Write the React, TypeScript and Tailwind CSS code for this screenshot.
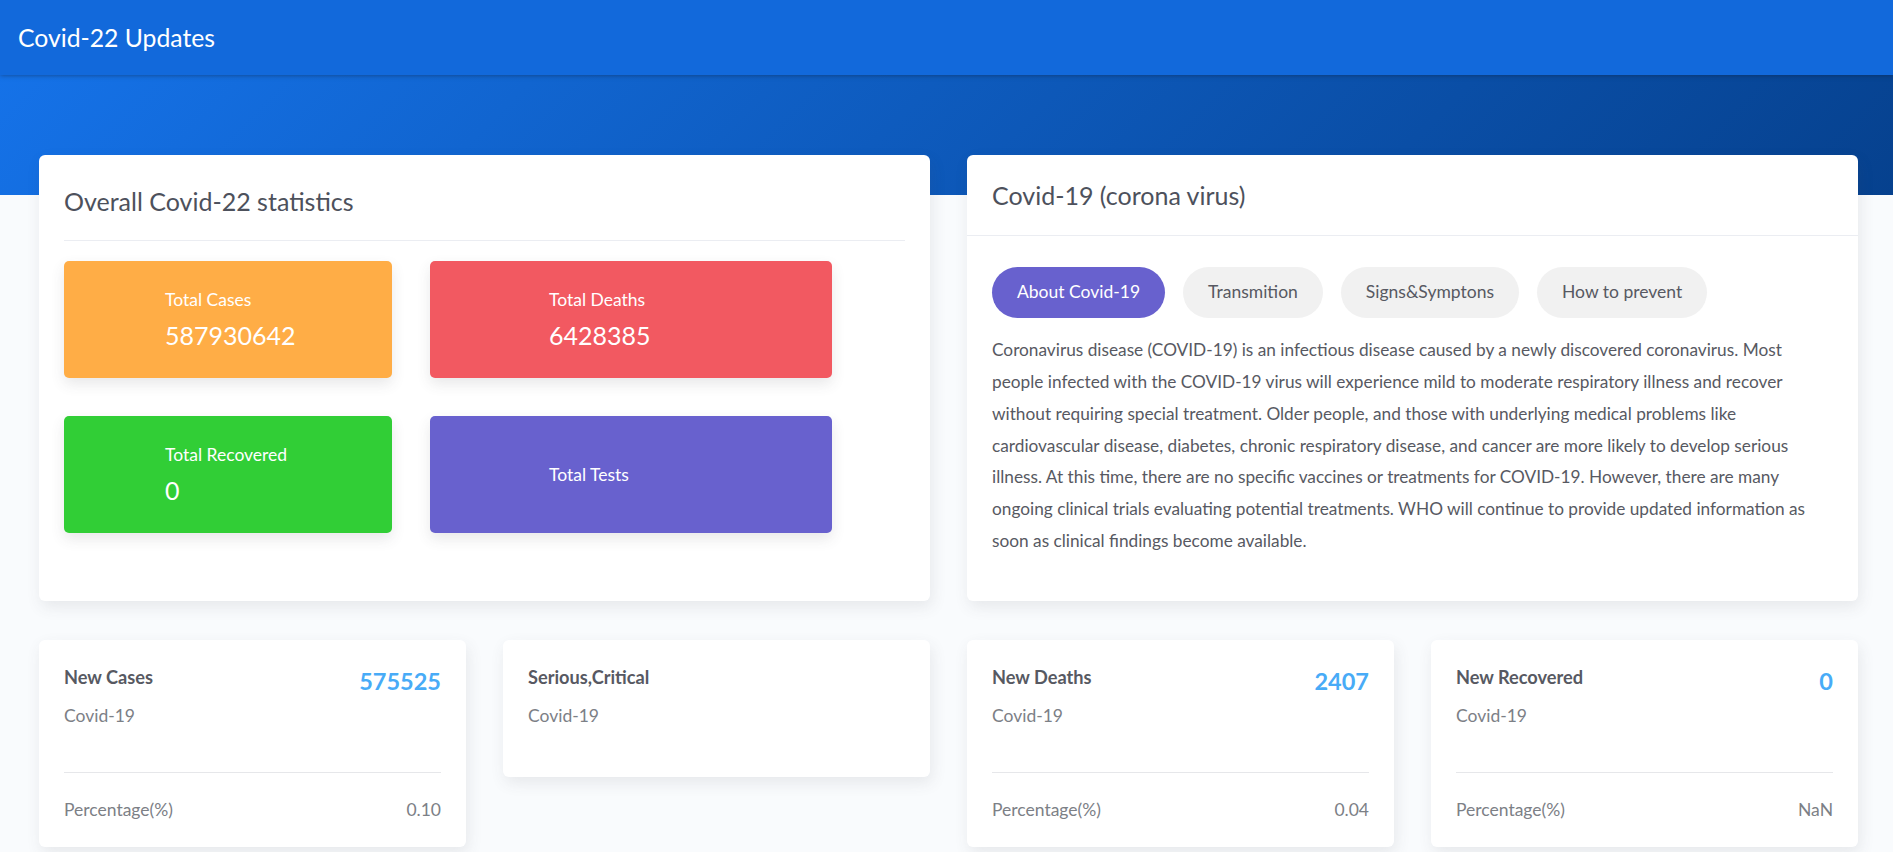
import React from "react";

const totals = [
  { label: "Total Cases", value: "587930642", bg: "bg-[#ffad46]", pad: "pl-[101px]" },
  { label: "Total Deaths", value: "6428385", bg: "bg-[#f25961]", pad: "pl-[119px]" },
  { label: "Total Recovered", value: "0", bg: "bg-[#31ce36]", pad: "pl-[101px]" },
  { label: "Total Tests", value: "", bg: "bg-[#6861ce]", pad: "pl-[119px]" },
];

const tabs = ["About Covid-19", "Transmition", "Signs&Symptons", "How to prevent"];

const daily = [
  { title: "New Cases", value: "575525", pct: "0.10" },
  { title: "Serious,Critical", value: "", pct: null },
  { title: "New Deaths", value: "2407", pct: "0.04" },
  { title: "New Recovered", value: "0", pct: "NaN" },
];

const card = "rounded-[6px] bg-white shadow-[2px_6px_15px_0px_rgba(69,65,78,0.1)]";

function StatBox({ label, value, bg, pad }: (typeof totals)[number]) {
  return (
    <div className={`flex h-[117px] flex-col justify-center rounded-[5px] text-white shadow-[0_6px_14px_rgba(69,65,78,0.12)] ${bg} ${pad}`}>
      <p className="text-[17.5px] leading-[24px]">{label}</p>
      {value && <p className="mt-[8px] pb-[2px] text-[25px] leading-[30px]">{value}</p>}
    </div>
  );
}

function DailyCard({ title, value, pct }: (typeof daily)[number]) {
  return (
    <div className={`${card} px-[25px] pt-[25px] ${pct ? "pb-[25px]" : "pb-[49px]"}`}>
      <div className="flex items-start justify-between">
        <div>
          <h4 className="text-[18.2px] font-bold leading-[25px] text-[#575962]">{title}</h4>
          <p className="mt-[13px] text-[17.5px] leading-[25px] text-[#7c8086]">Covid-19</p>
        </div>
        {value && <span className="text-[23.5px] font-bold leading-[33px] text-[#48abf7]">{value}</span>}
      </div>
      {pct && (
        <>
          <div className="mt-[44px] border-t border-[#e6e7ea]" />
          <div className="mt-[24px] flex justify-between text-[17.5px] leading-[25px] text-[#7c8086]">
            <span>Percentage(%)</span>
            <span>{pct}</span>
          </div>
        </>
      )}
    </div>
  );
}

export default function App() {
  return (
    <div className="min-h-screen bg-[#f9fbfd] font-['Lato',sans-serif] text-[#575962]">
      <header className="relative z-10 flex h-[75px] items-center bg-[#1269db] px-[18px] shadow-[0_0_5px_rgba(18,23,39,0.5)]">
        <h1 className="text-[24.75px] text-white">Covid-22 Updates</h1>
      </header>
      <div className="h-[120px] bg-[linear-gradient(-45deg,#06418e,#1572e8)]" />

      <main className="-mt-[40px] px-[39px]">
        <div className="grid grid-cols-[891px_891px] gap-x-[37px]">
          <section className={`${card} h-[446px] px-[25px]`}>
            <div className="border-b border-[#ebedf2] pt-[31px] pb-[23px]">
              <h2 className="text-[25px] leading-[31px] text-[#4d515c]">Overall Covid-22 statistics</h2>
            </div>
            <div className="mt-[20px] grid w-[768px] grid-cols-[328px_402px] gap-x-[38px] gap-y-[38px]">
              {totals.map((t) => (
                <StatBox key={t.label} {...t} />
              ))}
            </div>
          </section>

          <section className={`${card} h-[446px]`}>
            <div className="flex h-[81px] items-center border-b border-[#ebedf2] px-[25px]">
              <h2 className="text-[25px] leading-[31px] text-[#4d515c]">Covid-19 (corona virus)</h2>
            </div>
            <div className="px-[25px] pt-[31px]">
              <ul className="flex gap-[18px]">
                {tabs.map((tab, i) => (
                  <li
                    key={tab}
                    className={`flex h-[51px] items-center rounded-full px-[25px] text-[17.5px] ${
                      i === 0 ? "bg-[#6861ce] text-white" : "bg-[#f1f1f1] text-[#575962]"
                    }`}
                  >
                    {tab}
                  </li>
                ))}
              </ul>
              <p className="mt-[16px] max-w-[822px] text-[17.25px] leading-[31.85px] text-[#575962]">
                Coronavirus disease (COVID-19) is an infectious disease caused by a newly discovered coronavirus. Most
                people infected with the COVID-19 virus will experience mild to moderate respiratory illness and recover
                without requiring special treatment. Older people, and those with underlying medical problems like
                cardiovascular disease, diabetes, chronic respiratory disease, and cancer are more likely to develop
                serious illness. At this time, there are no specific vaccines or treatments for COVID-19. However, there
                are many ongoing clinical trials evaluating potential treatments. WHO will continue to provide updated
                information as soon as clinical findings become available.
              </p>
            </div>
          </section>
        </div>

        <div className="mt-[39px] grid grid-cols-[891px_891px] items-start gap-x-[37px] pb-[20px]">
          <div className="grid grid-cols-[427px_427px] items-start gap-x-[37px]">
            <DailyCard {...daily[0]} />
            <DailyCard {...daily[1]} />
          </div>
          <div className="grid grid-cols-[427px_427px] items-start gap-x-[37px]">
            <DailyCard {...daily[2]} />
            <DailyCard {...daily[3]} />
          </div>
        </div>
      </main>
    </div>
  );
}
